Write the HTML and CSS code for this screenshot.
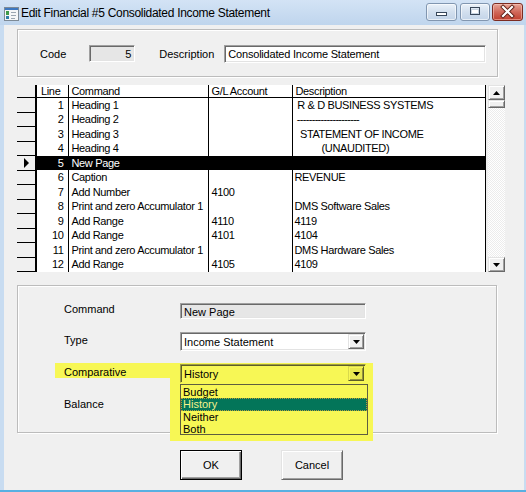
FILE: index.html
```html
<!DOCTYPE html>
<html lang="en">
<head>
    <meta charset="UTF-8">
    <title>Edit Financial #5 Consolidated Income Statement</title>
    <link rel="stylesheet" href="styles.css">
</head>
<body>
    <div class="window">
        <div class="titlebar">
            <svg class="app-icon" width="15" height="14" viewBox="0 0 15 14">
                <rect x="0.5" y="0.5" width="14" height="13" fill="#f4f6f8" stroke="#7d8a96"/>
                <rect x="1" y="1" width="13" height="2" fill="#3d78c0"/>
                <rect x="2" y="4" width="3" height="4" fill="#3f9a4a"/>
                <rect x="2" y="9" width="3" height="3" fill="#2f7fa8"/>
                <rect x="7" y="5" width="5" height="1" fill="#9aa6b2"/>
                <rect x="7" y="8" width="5" height="1" fill="#9aa6b2"/>
                <rect x="7" y="11" width="4" height="1" fill="#9aa6b2"/>
            </svg>
            <span class="title">Edit Financial #5 Consolidated Income Statement</span>
            <div class="caption-buttons">
                <div class="cap-btn">
                    <svg width="29" height="16" viewBox="0 0 29 16">
                        <rect x="9.5" y="8.5" width="10" height="3" fill="#fff" stroke="#38475a"/>
                    </svg>
                </div>
                <div class="cap-btn">
                    <svg width="28" height="16" viewBox="0 0 28 16">
                        <rect x="9.5" y="3.5" width="9" height="7" fill="none" stroke="#38475a"/>
                        <rect x="10.5" y="5.5" width="7" height="4" fill="#fff" stroke="#c8d4e2"/>
                    </svg>
                </div>
                <div class="cap-btn close">
                    <svg width="29" height="16" viewBox="0 0 29 16">
                        <path d="M10 3 L19 12 M19 3 L10 12" stroke="#5b1d14" stroke-width="4" stroke-linecap="square"/>
                        <path d="M10 3 L19 12 M19 3 L10 12" stroke="#fff" stroke-width="2.2" stroke-linecap="square"/>
                    </svg>
                </div>
            </div>
        </div>

        <div class="client">
            <div class="group header-group">
                <span class="lbl code-lbl">Code</span>
                <div class="field readonly code-field">5</div>
                <span class="lbl desc-lbl">Description</span>
                <div class="field desc-field">Consolidated Income Statement</div>
            </div>

            <div class="grid-area">
                <table class="grid">
                    <colgroup>
                        <col class="c-ind">
                        <col class="c-line">
                        <col class="c-cmd">
                        <col class="c-gl">
                        <col class="c-desc">
                    </colgroup>
                    <thead>
                        <tr>
                            <th class="ind"></th>
                            <th class="line">Line</th>
                            <th>Command</th>
                            <th>G/L Account</th>
                            <th>Description</th>
                        </tr>
                    </thead>
                    <tbody>
                        <tr><td class="ind"></td><td class="num">1</td><td>Heading 1</td><td></td><td class="desc"> R &amp; D BUSINESS SYSTEMS</td></tr>
                        <tr><td class="ind"></td><td class="num">2</td><td>Heading 2</td><td></td><td class="desc dashes"> ---------------------</td></tr>
                        <tr><td class="ind"></td><td class="num">3</td><td>Heading 3</td><td></td><td class="desc">  STATEMENT OF INCOME</td></tr>
                        <tr><td class="ind"></td><td class="num">4</td><td>Heading 4</td><td></td><td class="desc">          (UNAUDITED)</td></tr>
                        <tr class="selected"><td class="ind"><span class="pointer"></span></td><td class="num">5</td><td>New Page</td><td></td><td class="desc"></td></tr>
                        <tr><td class="ind"></td><td class="num">6</td><td>Caption</td><td></td><td class="desc">REVENUE</td></tr>
                        <tr><td class="ind"></td><td class="num">7</td><td>Add Number</td><td>4100</td><td class="desc"></td></tr>
                        <tr><td class="ind"></td><td class="num">8</td><td>Print and zero Accumulator 1</td><td></td><td class="desc">DMS Software Sales</td></tr>
                        <tr><td class="ind"></td><td class="num">9</td><td>Add Range</td><td>4110</td><td class="desc">4119</td></tr>
                        <tr><td class="ind"></td><td class="num">10</td><td>Add Range</td><td>4101</td><td class="desc">4104</td></tr>
                        <tr><td class="ind"></td><td class="num">11</td><td>Print and zero Accumulator 1</td><td></td><td class="desc">DMS Hardware Sales</td></tr>
                        <tr><td class="ind"></td><td class="num">12</td><td>Add Range</td><td>4105</td><td class="desc">4109</td></tr>
                    </tbody>
                </table>

                <div class="vscroll">
                    <div class="sb-btn">
                        <svg width="7" height="4" viewBox="0 0 7 4"><path d="M0 4 L3.5 0 L7 4 Z" fill="#000"/></svg>
                    </div>
                    <div class="sb-thumb"></div>
                    <div class="sb-track"></div>
                    <div class="sb-btn">
                        <svg width="7" height="4" viewBox="0 0 7 4"><path d="M0 0 L7 0 L3.5 4 Z" fill="#000"/></svg>
                    </div>
                </div>
            </div>

            <div class="group detail-group">
                <div class="hl-bar"></div>
                <div class="hl-box"></div>

                <span class="lbl row-lbl">Command</span>
                <div class="field readonly cmd-field">New Page</div>

                <span class="lbl row-lbl">Type</span>
                <div class="field combo">
                    <span class="combo-text">Income Statement</span>
                    <span class="combo-btn"><svg width="7" height="4" viewBox="0 0 7 4"><path d="M0 0 L7 0 L3.5 4 Z" fill="#000"/></svg></span>
                </div>

                <span class="lbl row-lbl">Comparative</span>
                <div class="field combo hl">
                    <span class="combo-text">History</span>
                    <span class="combo-btn"><svg width="7" height="4" viewBox="0 0 7 4"><path d="M0 0 L7 0 L3.5 4 Z" fill="#000"/></svg></span>
                    <ul class="dropdown">
                        <li>Budget</li>
                        <li class="active">History</li>
                        <li>Neither</li>
                        <li>Both</li>
                    </ul>
                </div>

                <span class="lbl row-lbl">Balance</span>
                <div class="field combo">
                    <span class="combo-text"></span>
                    <span class="combo-btn"></span>
                </div>
            </div>

            <div class="actions">
                <button class="btn default">OK</button>
                <button class="btn">Cancel</button>
            </div>
        </div>
    </div>
</body>
</html>
```

FILE: styles.css
```css
* {
    margin: 0;
    padding: 0;
    box-sizing: border-box;
}

body {
    font-family: 'Liberation Sans', Arial, sans-serif;
    font-size: 11px;
    color: #000;
    background: #f0f0f0;
}

.window {
    width: 526px;
    height: 492px;
    background: #c8dcf1;
    border-bottom: 2px solid #58b0e2;
    display: flex;
    flex-direction: column;
}

/* title bar */
.titlebar {
    height: 25px;
    display: flex;
    align-items: flex-start;
    padding-left: 4px;
    background: linear-gradient(#d3e3f5, #bfd5ed);
}

.app-icon {
    margin-top: 7px;
    flex: none;
}

.title {
    margin-left: 2px;
    margin-top: 6px;
    font-size: 12px;
    line-height: 14px;
    letter-spacing: -0.3px;
    white-space: nowrap;
}

.caption-buttons {
    margin-left: auto;
    margin-right: 3px;
    margin-top: 3px;
    display: flex;
    gap: 2px;
}

.cap-btn {
    width: 31px;
    height: 18px;
    border: 1px solid #8196b0;
    border-radius: 3px;
    background: linear-gradient(#eaf1f9, #d2dfee 50%, #c3d4e8);
    box-shadow: inset 0 0 0 1px rgba(255, 255, 255, 0.6);
    display: flex;
}

.cap-btn:nth-child(2) {
    width: 30px;
    margin-left: 1px;
}

.cap-btn.close {
    border-color: #7c2c22;
    background: linear-gradient(#e8a596, #d0685a 50%, #c1402f);
    box-shadow: inset 0 0 0 1px rgba(255, 210, 200, 0.5);
}

/* client area */
.client {
    flex: 1;
    margin: 0 2px 0 4px;
    background: #f0f0f0;
    padding: 4px 0 0 13px;
}

.group {
    border: 1px solid #bcbcbc;
    box-shadow: inset 1px 1px 0 #fff, 1px 1px 0 #fff;
}

.lbl {
    white-space: nowrap;
}

.field {
    border: 1px solid;
    border-color: #a0a0a0 #fff #fff #a0a0a0;
    box-shadow: inset 1px 1px 0 #696969, inset -1px -1px 0 #e3e3e3;
    background: #fff;
    line-height: 14px;
    padding: 0 3px;
    white-space: nowrap;
}

.field.readonly {
    background: #e6e6e6;
}

.header-group {
    width: 481px;
    height: 48px;
    display: flex;
    align-items: center;
    padding: 1px 0 0 22px;
}

.code-field {
    width: 46px;
    height: 17px;
    margin-left: 23px;
    text-align: right;
    padding-top: 1px;
}

.desc-lbl {
    margin-left: 24px;
}

.desc-field {
    width: 262px;
    height: 18px;
    margin-left: 10px;
    letter-spacing: -0.2px;
    padding-top: 1px;
}

/* grid */
.grid-area {
    display: flex;
    gap: 2px;
    margin-top: 8px;
    height: 187px;
}

.grid {
    width: 468px;
    table-layout: fixed;
    border-collapse: collapse;
    background: #fff;
    border-right: 1px solid #000;
}

.c-ind { width: 19px; }
.c-line { width: 32px; }
.c-cmd { width: 140px; }
.c-gl { width: 84px; }
.c-desc { width: 193px; }

.grid th,
.grid td {
    font-weight: normal;
    text-align: left;
    white-space: pre;
    overflow: hidden;
    padding: 0 0 0 3px;
    border-left: 1px solid #000;
    letter-spacing: -0.35px;
}

.grid th {
    height: 12px;
    line-height: 12px;
    border-bottom: 1px solid #000;
}

.grid td {
    height: 14.5px;
    line-height: 14px;
}

.grid th.line {
    padding-left: 4px;
}

.grid .ind {
    background: #f0f0f0;
    border-left: none;
    border-right: 2px solid #000;
    border-bottom: 1px solid #000;
    padding: 0;
}

.grid td.num {
    text-align: right;
    padding: 0 4px 0 0;
}

.grid td.desc {
    padding-left: 2px;
}

.grid td.dashes {
    letter-spacing: -0.7px;
}

.grid tr.selected td {
    background: #000;
    color: #fff;
}

.grid tr.selected td.ind {
    background: #f0f0f0;
}

.pointer {
    display: block;
    width: 0;
    height: 0;
    margin-left: 7px;
    border-top: 5px solid transparent;
    border-bottom: 5px solid transparent;
    border-left: 5px solid #000;
}

.vscroll {
    width: 17px;
    display: flex;
    flex-direction: column;
    background-color: #fafafa;
    background-image: repeating-conic-gradient(#ececec 0 25%, #fff 0 50%);
    background-size: 2px 2px;
}

.sb-btn,
.sb-thumb,
.combo-btn,
.btn {
    background: #f0f0f0;
    border: 1px solid;
    border-color: #e3e3e3 #696969 #696969 #e3e3e3;
    box-shadow: inset 1px 1px 0 #fff, inset -1px -1px 0 #a0a0a0;
}

.sb-btn {
    height: 15px;
    display: flex;
    align-items: center;
    justify-content: center;
}

.sb-thumb {
    height: 8px;
}

.sb-track {
    flex: 1;
}

/* detail section */
.detail-group {
    position: relative;
    z-index: 0;
    width: 480px;
    height: 148px;
    margin-top: 13px;
    padding: 17px 0 0 46px;
    display: grid;
    grid-template-columns: 116px 186px;
    grid-template-rows: 16px 19px 19px 19px;
    row-gap: 13px;
    align-content: start;
}

.row-lbl {
    align-self: center;
    padding-bottom: 4px;
}

.cmd-field {
    padding-top: 1px;
}

.combo {
    position: relative;
    display: flex;
    align-items: center;
    padding: 0 1px 0 3px;
}

.combo-text {
    flex: 1;
    padding-top: 1px;
}

.combo-btn {
    width: 16px;
    height: 15px;
    display: flex;
    align-items: center;
    justify-content: center;
}

.combo.hl {
    background: #f7f755;
    border-color: #9c9c40 #f7f755 #f7f755 #9c9c40;
    box-shadow: inset 1px 1px 0 #5e5e28;
}

.combo.hl .combo-btn {
    background: #e8e850;
    border-color: #d9d94c #5e5e28 #5e5e28 #d9d94c;
    box-shadow: inset 1px 1px 0 #f7f755, inset -1px -1px 0 #93933c;
}

.hl-bar,
.hl-box {
    position: absolute;
    z-index: -1;
    background: #f7f755;
}

.hl-bar {
    left: 37px;
    top: 77px;
    width: 120px;
    height: 15px;
}

.hl-box {
    left: 152px;
    top: 77px;
    width: 203px;
    height: 78px;
}

.dropdown {
    position: absolute;
    z-index: 2;
    left: -1px;
    top: 19px;
    width: 188px;
    height: 51px;
    list-style: none;
    background: #f7f755;
    border: 1px solid #5e5e40;
    padding-top: 1px;
}

.dropdown li {
    height: 12.25px;
    line-height: 12px;
    padding-left: 2px;
}

.dropdown li.active {
    background: #037559;
    color: #f4f28c;
    outline: 1px dotted #b79a3a;
    outline-offset: -1px;
}

/* buttons */
.actions {
    display: flex;
    gap: 39px;
    margin: 17px 0 0 163px;
}

.btn {
    width: 62px;
    height: 30px;
    font-family: inherit;
    font-size: 11px;
    color: #000;
}

.btn.default {
    border-color: #000;
    box-shadow: inset 1px 1px 0 #fff, inset -1px -1px 0 #696969, inset -2px -2px 0 #a0a0a0;
}
```
